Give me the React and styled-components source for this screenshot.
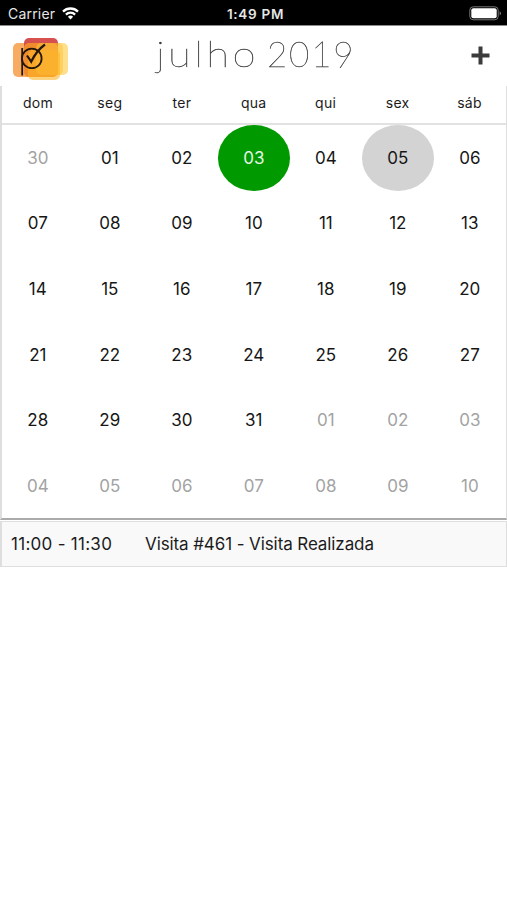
import React from 'react';
import styled, { createGlobalStyle } from 'styled-components';

const GlobalStyle = createGlobalStyle`
    * {
        box-sizing: border-box;
    }

    body {
        margin: 0;
        background: #fff;
        font-family: Inter, "Liberation Sans", sans-serif;
        color: #1c1c1c;
    }
`

const Screen = styled.div`
    width: 507px;
    height: 900px;
    overflow: hidden;
    background: #fff;
`

const StatusBar = styled.div`
    display: grid;
    grid-template-columns: 1fr auto 1fr;
    align-items: center;
    height: 26px;
    padding: 2px 5px 0 8px;
    border-bottom: 1px solid #8a8a8a;
    background: #000;
    color: #e6e6e6;
    font-size: 14px;
    line-height: 22px;

    svg {
        display: block;
    }
`

const Carrier = styled.div`
    display: flex;
    align-items: center;
    gap: 7px;
    letter-spacing: 0.2px;
`

const Clock = styled.div`
    padding-left: 1px;
    font-size: 13.5px;
    font-weight: 600;
    letter-spacing: 0.7px;
`

const Battery = styled.div`
    justify-self: end;
`

const Header = styled.header`
    display: grid;
    grid-template-columns: 80px 1fr 80px;
    height: 60px;
`

const LogoBox = styled.div`
    padding: 10px 0 0 12px;

    svg {
        display: block;
    }
`

const Title = styled.h1`
    display: flex;
    margin: 0;
    padding-left: 76px;
    font-family: Lato, sans-serif;
    font-size: 35px;
    font-weight: 100;
    line-height: 54px;
    white-space: nowrap;
    color: #333;
    -webkit-text-stroke: 0.35px #444;
    will-change: transform;
`

const Month = styled.span`
    width: 111px;
    letter-spacing: 2.8px;
    transform: scaleX(1.2);
    transform-origin: left;
`

const Year = styled.span`
    letter-spacing: 1.8px;
`

const AddButton = styled.button`
    display: flex;
    justify-content: flex-end;
    padding: 20px 17px 0 0;
    border: 0;
    background: none;

    svg {
        display: block;
    }
`

const Calendar = styled.section`
    height: 434px;
    border: solid #dedede;
    border-width: 0 1px 2px 2px;
    border-bottom-color: #ababab;
`

const Weekdays = styled.div`
    display: grid;
    grid-template-columns: repeat(7, 1fr);
    height: 39px;
    padding-right: 0.5px;
    border-bottom: 2px solid #e2e2e2;
    font-size: 14px;
    line-height: 34px;
    letter-spacing: 0.3px;
    text-align: center;
`

const Days = styled.div`
    display: grid;
    grid-template-columns: repeat(7, 1fr);
    grid-auto-rows: 65.6px;
`

const dayColor = ({ $outside, $selected }) => {
    if ($selected) return '#e6f5e6';
    return $outside ? '#a3a3a3' : '#161616';
}

const Day = styled.div`
    display: flex;
    align-items: center;
    justify-content: center;
    padding-right: 0.4px;
    border-radius: 50%;
    background: ${props => props.$fill || 'transparent'};
    color: ${dayColor};
    font-size: 17px;
`

const Event = styled.div`
    display: flex;
    align-items: center;
    height: 46px;
    margin-top: 1px;
    border: solid #dedede;
    border-width: 1px 1px 1px 2px;
    background: #f9f9f9;
    font-size: 17px;
`

const EventTime = styled.span`
    width: 143px;
    padding-left: 9px;
    letter-spacing: 0.28px;
`

const EventName = styled.span`
    letter-spacing: -0.1px;
`

const WifiIcon = () => (
    <svg width="17" height="13" viewBox="0 0 17 13" fill="none" stroke="#fff" strokeWidth="2.3">
        <path d="M1 4.6a10.6 10.6 0 0 1 15 0" />
        <path d="M3.9 7.6a6.5 6.5 0 0 1 9.2 0" />
        <path d="M8.5 12.4 5.9 9.8a3.7 3.7 0 0 1 5.2 0z" fill="#fff" stroke="none" />
    </svg>
)

const BatteryIcon = () => (
    <svg width="33" height="15" viewBox="0 0 33 15">
        <rect x="0.8" y="0.8" width="28.4" height="13" rx="3.4" fill="none" stroke="#777" strokeWidth="1" />
        <rect x="2.3" y="2.3" width="25.4" height="10" rx="2" fill="#fff" />
        <path d="M30.7 5.2c1.7.8 1.7 3.4 0 4.2z" fill="#888" />
    </svg>
)

const Logo = () => (
    <svg width="58" height="46" viewBox="0 0 58 46">
        <rect x="29" y="7" width="27" height="32" rx="5" fill="#fee08c" />
        <rect x="1" y="7" width="30" height="34" rx="5" fill="#f8ab62" />
        <rect x="12" y="2" width="34" height="36" rx="5" fill="#d5504f" />
        <rect x="12" y="7" width="34" height="34" rx="5" fill="#f08c2c" />
        <rect x="24" y="7" width="27" height="32" rx="5" fill="#fdc23c" fillOpacity="0.55" />
        <rect x="16" y="14" width="32" height="30" rx="5" fill="#fdb52a" fillOpacity="0.6" />
        <g fill="none" stroke="#26170a" strokeWidth="1.8">
            <path d="M10.2 12v27.5" />
            <circle cx="19.8" cy="22.4" r="9.8" />
            <path d="M15 19.5l4.2 6.2C22 20 26 13.5 33 8.5" strokeWidth="2.2" />
        </g>
    </svg>
)

const PlusIcon = () => (
    <svg width="20" height="20" viewBox="0 0 20 20" stroke="#3b3b3b" strokeWidth="4">
        <path d="M10.5 .5v18M1.5 9.5h18" />
    </svg>
)

const weekdays = ['dom', 'seg', 'ter', 'qua', 'qui', 'sex', 'sáb'];

// 30 june to 10 august
const days = Array.from({ length: 42 }, (_, i) => {
    const date = new Date(2019, 5, 30 + i);
    return {
        key: i,
        label: String(date.getDate()).padStart(2, '0'),
        outside: date.getMonth() !== 6,
    };
});

const fills = { 3: '#009900', 5: '#d3d3d3' };

const App = () => (
    <Screen>
        <GlobalStyle />
        <StatusBar>
            <Carrier>Carrier <WifiIcon /></Carrier>
            <Clock>1:49 PM</Clock>
            <Battery><BatteryIcon /></Battery>
        </StatusBar>
        <Header>
            <LogoBox><Logo /></LogoBox>
            <Title><Month>julho</Month> <Year>2019</Year></Title>
            <AddButton aria-label="+"><PlusIcon /></AddButton>
        </Header>
        <Calendar>
            <Weekdays>
                {weekdays.map(day => <span key={day}>{day}</span>)}
            </Weekdays>
            <Days>
                {days.map(day => (
                    <Day
                        key={day.key}
                        $outside={day.outside}
                        $selected={day.key === 3}
                        $fill={fills[day.key]}
                    >{day.label}</Day>
                ))}
            </Days>
        </Calendar>
        <Event>
            <EventTime>11:00 - 11:30</EventTime>
            <EventName>Visita #461 - Visita Realizada</EventName>
        </Event>
    </Screen>
)

export default App;
